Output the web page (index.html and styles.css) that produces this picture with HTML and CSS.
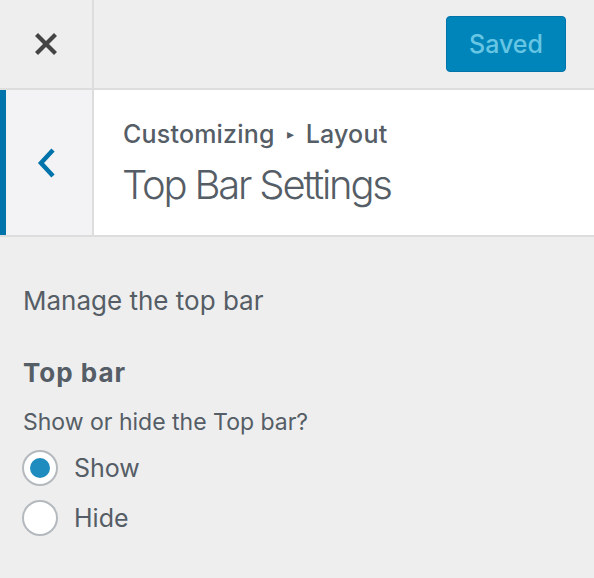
FILE: index.html
```html
<!DOCTYPE html>
<html lang="en">

<head>
    <meta charset="UTF-8">
    <meta name="viewport" content="width=device-width, initial-scale=1.0">
    <title>Customizer - Top Bar Settings</title>
    <link rel="stylesheet" href="styles.css">
</head>

<body>
    <header class="topbar">
        <button class="close" aria-label="Close">
            <svg width="22" height="22" viewBox="0 0 22 22">
                <path d="M3 3 L19 19 M19 3 L3 19" stroke="#444" stroke-width="4.2" stroke-linecap="square" fill="none" />
            </svg>
        </button>
        <div class="actions">
            <button class="save" disabled>Saved</button>
        </div>
    </header>

    <section class="section-head">
        <button class="back" aria-label="Back">
            <svg width="20" height="32" viewBox="0 0 20 32">
                <path d="M16 3 L4 16 L16 29" stroke="#0073aa" stroke-width="4.5" fill="none" />
            </svg>
        </button>
        <div class="titles">
            <span class="crumb">Customizing <span class="arrow">&#9656;</span> Layout</span>
            <h2>Top Bar Settings</h2>
        </div>
    </section>

    <div class="content">
        <p class="description">Manage the top bar</p>

        <div class="control">
            <h3>Top bar</h3>
            <p class="hint">Show or hide the Top bar?</p>
            <label class="radio">
                <input type="radio" name="topbar" checked>
                <span class="dot"></span>
                Show
            </label>
            <label class="radio">
                <input type="radio" name="topbar">
                <span class="dot"></span>
                Hide
            </label>
        </div>
    </div>
</body>

</html>
```

FILE: styles.css
```css
body {
    font-family: Inter, "Noto Sans", sans-serif;
    margin: 0;
    padding: 0;
    background-color: #eee;
    color: #555d66;
}

button {
    font-family: inherit;
    cursor: pointer;
}

.topbar {
    display: flex;
    height: 88px;
    border-bottom: 2px solid #ddd;
}

.close {
    width: 94px;
    border: none;
    border-right: 2px solid #ddd;
    background: none;
    display: flex;
    align-items: center;
    justify-content: center;
    padding: 0;
}

.actions {
    flex: 1;
    display: flex;
    align-items: center;
    justify-content: flex-end;
    padding-right: 28px;
}

.save {
    width: 120px;
    height: 56px;
    border: 1px solid #0073aa;
    border-radius: 4px;
    background-color: #0085ba;
    color: #66c6e4;
    font-size: 25px;
    font-weight: 500;
    padding: 0;
}

.section-head {
    display: flex;
    height: 145px;
    background-color: #fff;
    border-bottom: 2px solid #ddd;
}

.back {
    width: 94px;
    border: none;
    border-left: 6px solid #0073aa;
    border-right: 2px solid #ddd;
    background-color: #f3f3f5;
    display: flex;
    align-items: center;
    justify-content: center;
    padding: 0 5px 0 0;
}

.titles {
    display: flex;
    flex-direction: column;
    padding: 29px 0 0 29px;
}

.crumb {
    font-size: 25px;
    font-weight: 500;
    line-height: 30px;
    letter-spacing: 0.2px;
}

.arrow {
    font-size: 14px;
    vertical-align: 4px;
    margin: 0 5px;
}

.titles h2 {
    margin: 12px 0 0 -1px;
    font-size: 40px;
    font-weight: 300;
    line-height: 48px;
    letter-spacing: -2.2px;
}

.content {
    padding: 48px 22px;
}

.description {
    margin: 0 0 0 1px;
    font-size: 26px;
    line-height: 32px;
}

.control h3 {
    margin: 40px 0 0 1px;
    font-size: 26px;
    font-weight: 700;
    line-height: 32px;
    letter-spacing: 1px;
}

.hint {
    margin: 19px 0 7px 1px;
    font-size: 23px;
    line-height: 28px;
}

.radio {
    display: flex;
    align-items: center;
    gap: 16px;
    height: 50px;
    font-size: 25px;
    line-height: 50px;
}

.radio input {
    display: none;
}

.dot {
    width: 32px;
    height: 32px;
    border: 2px solid #b4b9be;
    border-radius: 50%;
    background-color: #fff;
    display: flex;
    align-items: center;
    justify-content: center;
}

.radio input:checked + .dot::before {
    content: "";
    width: 20px;
    height: 20px;
    border-radius: 50%;
    background-color: #1e8cbe;
}
```
